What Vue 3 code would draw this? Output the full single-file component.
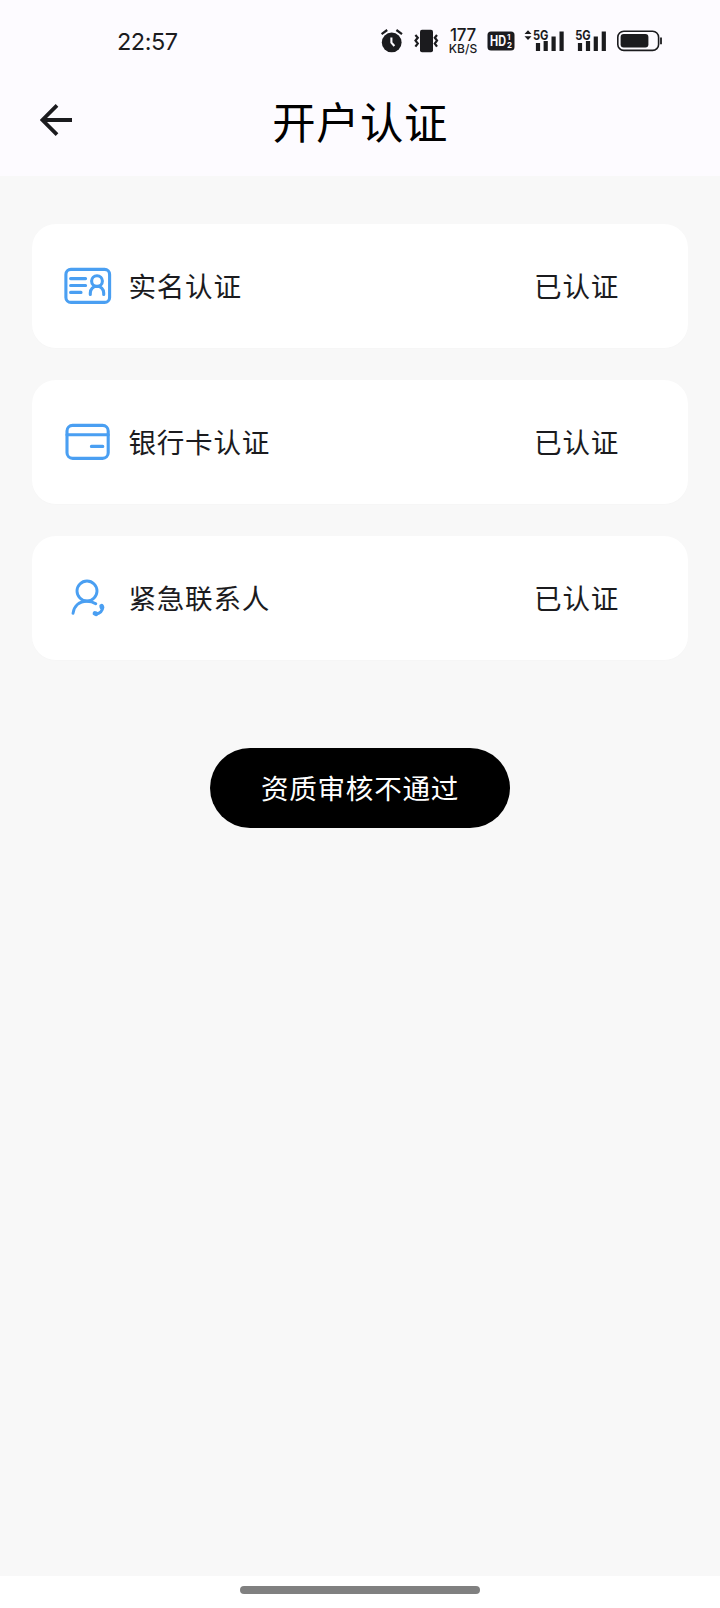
<script setup>
const items = [
  { id: 'identity', label: '实名认证', status: '已认证' },
  { id: 'bank', label: '银行卡认证', status: '已认证' },
  { id: 'contact', label: '紧急联系人', status: '已认证' },
]
</script>

<template>
  <div class="screen">
    <header class="header">
      <div class="status-bar">
        <span class="time">22:57</span>
        <div class="status-icons">
          <svg class="alarm" width="22" height="24" viewBox="0 0 22 24">
            <circle cx="10.7" cy="13.4" r="9.9" fill="#1b1b1e" />
            <path d="M.6 5.2 6.2 1M21 5.2 15.4 1" stroke="#1b1b1e" stroke-width="2.2" fill="none" />
            <path d="M10.4 8.4v5.2l3 3.4" stroke="#fdfbff" stroke-width="2.1" fill="none" />
          </svg>
          <svg class="vibrate" width="24" height="24" viewBox="0 0 24 24">
            <rect x="6" y="0.8" width="13" height="22.4" rx="2" fill="#1b1b1e" />
            <path d="M1.4 6 3.8 8.7 1.5 11.6 3.8 14.5 1.4 17.6M23 6 20.8 8.7 23 11.6 20.8 14.5 23 17.6" stroke="#1b1b1e" stroke-width="2.2" fill="none" />
          </svg>
          <div class="speed">
            <span class="speed-value">177</span>
            <span class="speed-unit">KB/S</span>
          </div>
          <svg class="hd" width="28" height="20" viewBox="0 0 28 20">
            <rect x="0.5" y="0.5" width="27" height="19" rx="3.5" fill="#1b1b1e" />
            <text x="3" y="15" class="light" font-size="14" font-weight="700" textLength="16" lengthAdjust="spacingAndGlyphs">HD</text>
            <text x="20" y="9.2" class="light" font-size="8" font-weight="700">1</text>
            <text x="20" y="17.4" class="light" font-size="8" font-weight="700">2</text>
          </svg>
          <svg class="signal-a" width="41" height="24" viewBox="0 0 41 24">
            <path d="M0.5 5 4 1.2 7.5 5ZM0.5 7.2 4 11 7.5 7.2Z" fill="#1b1b1e" />
            <text x="9" y="11" font-size="13" font-weight="700" textLength="15.5" lengthAdjust="spacingAndGlyphs">5G</text>
            <path d="M14 14v8M21.7 12v10M29.6 7.5V22M37.6 2.5V22" stroke="#1b1b1e" stroke-width="4.2" />
          </svg>
          <svg class="signal-b" width="32" height="24" viewBox="0 0 32 24">
            <text x="0.2" y="11" font-size="13" font-weight="700" textLength="15.5" lengthAdjust="spacingAndGlyphs">5G</text>
            <path d="M5 14v8M13 12v10M20.8 7.5V22M28.8 2.5V22" stroke="#1b1b1e" stroke-width="4.2" />
          </svg>
          <svg class="battery" width="46" height="22" viewBox="0 0 46 22">
            <rect x="0.8" y="1.2" width="40.8" height="19.2" rx="6" fill="none" stroke="#1b1b1e" stroke-width="1.6" />
            <rect x="3.6" y="4" width="27.8" height="13.6" rx="3" fill="#1b1b1e" />
            <path d="M44 7.6v6.6" stroke="#1b1b1e" stroke-width="1.8" />
          </svg>
        </div>
      </div>
      <div class="title-bar">
        <svg class="back" width="32" height="32" viewBox="0 0 32 32">
          <path d="M32 16H3M17 1.4 2.4 16 17 30.6" fill="none" stroke="#1b1b1e" stroke-width="3.8" />
        </svg>
        <h1>开户认证</h1>
        <span class="spacer"></span>
      </div>
    </header>

    <main class="content">
      <section v-for="item in items" :key="item.id" class="card">
        <svg v-if="item.id === 'identity'" class="icon" viewBox="0 0 48 48">
          <rect x="1.9" y="7.4" width="43.7" height="33" rx="5" />
          <path d="M6.6 16.6h15M6.6 23.5h15M6.6 30.4h10.4" />
          <circle cx="33" cy="19.1" r="5.4" />
          <path d="M26.3 32.4v-1.3c0-4 3-6.8 6.7-6.8s6.7 2.8 6.7 6.8v1.3" />
        </svg>
        <svg v-else-if="item.id === 'bank'" class="icon" viewBox="0 0 48 48">
          <rect x="3" y="7.4" width="41.2" height="33" rx="5.6" />
          <path d="M3 16.8h41.2M27.4 28.4h11.4" />
        </svg>
        <svg v-else class="icon contact" viewBox="0 0 48 48">
          <circle cx="23" cy="17" r="10" />
          <path d="M9 39.4c.9-7.4 6.2-12.2 13.7-12.2 3.5 0 6.4.8 9.1 2.6" />
          <path d="M38.8 33c0 3.8-3 6.8-7 7" />
          <path class="phone-end" d="m37.6 32.2.4 1.2M30.9 39.4l1.2.4" />
        </svg>
        <span class="label">{{ item.label }}</span>
        <span class="status">{{ item.status }}</span>
      </section>
      <button class="result">资质审核不通过</button>
    </main>
    <footer class="nav"><span class="handle"></span></footer>
  </div>
</template>

<style>
body {
  margin: 0;
}
</style>

<style scoped>
.screen {
  width: 720px;
  height: 1608px;
  display: flex;
  flex-direction: column;
  background: #f8f8f8;
  color: #1b1b1e;
  font-family: "Noto Sans CJK SC", sans-serif;
  overflow: hidden;
}
.header {
  height: 176px;
  background: #fdfbff;
}
.status-bar {
  height: 80px;
  display: flex;
  align-items: center;
  justify-content: space-between;
  padding: 2px 57px 0 117px;
  box-sizing: border-box;
}
.time {
  font-family: Inter, sans-serif;
  font-size: 23.5px;
  letter-spacing: -0.5px;
}
.status-icons {
  display: flex;
  align-items: center;
}
.status-icons svg {
  overflow: visible;
}
.status-icons svg text,
.speed {
  font-family: Inter, sans-serif;
  fill: #1b1b1e;
}
.status-icons svg text.light {
  fill: #fdfbff;
}
.vibrate {
  margin-left: 11px;
}
.speed {
  width: 30px;
  margin-left: 10px;
  display: flex;
  flex-direction: column;
  align-items: center;
  font-weight: 500;
}
.speed-value {
  font-size: 17px;
  line-height: 15px;
  letter-spacing: -0.2px;
}
.speed-unit {
  font-size: 12px;
  line-height: 12px;
}
.hd {
  margin-left: 9px;
}
.signal-a {
  margin-left: 9px;
}
.signal-b {
  margin-left: 10px;
}
.battery {
  margin-left: 10px;
}
.title-bar {
  height: 80px;
  display: flex;
  align-items: center;
  justify-content: space-between;
  padding: 0 40px;
}
h1 {
  margin: 0;
  color: #000;
  font-size: 43.4px;
  line-height: 56px;
  font-weight: 400;
  letter-spacing: 0.5px;
}
.spacer {
  width: 32px;
}
.content {
  flex: 1;
  display: flex;
  flex-direction: column;
  gap: 32px;
  padding: 48px 32px 0;
}
.card {
  height: 124px;
  display: flex;
  align-items: center;
  padding: 0 69px 0 32px;
  box-sizing: border-box;
  background: #fff;
  border-radius: 24px;
  box-shadow: 0 1px 2px rgba(0, 0, 0, 0.01);
}
.icon {
  width: 48px;
  height: 48px;
  fill: none;
  stroke: #4a9ff2;
  stroke-width: 3.1;
  stroke-linecap: round;
}
.contact {
  stroke-width: 2.9;
}
.phone-end {
  stroke-width: 4.6;
}
.label,
.status {
  font-size: 27.6px;
  line-height: 40px;
  letter-spacing: 0.7px;
  padding-bottom: 2px;
}
.label {
  flex: 1;
  margin-left: 16.5px;
}
.result {
  align-self: center;
  width: 300px;
  height: 80px;
  margin-top: 56px;
  padding: 0 0 2px;
  border: 0;
  border-radius: 40px;
  background: #000;
  color: #fff;
  font: inherit;
  font-size: 27.6px;
  line-height: 78px;
  letter-spacing: 0.7px;
}
.nav {
  height: 32px;
  display: flex;
  align-items: center;
  justify-content: center;
  padding-bottom: 4px;
  box-sizing: border-box;
  background: #fff;
}
.handle {
  width: 240px;
  height: 8px;
  border-radius: 4px;
  background: #808080;
}
</style>
